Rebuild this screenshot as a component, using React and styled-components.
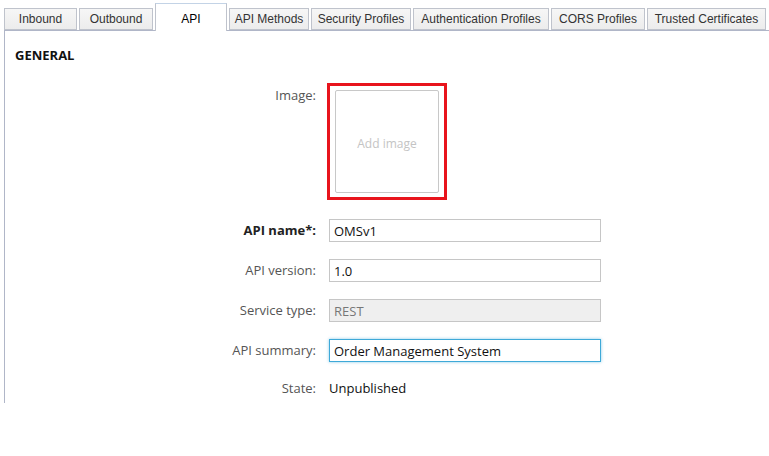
import styled, { createGlobalStyle } from "styled-components";

const GlobalStyle = createGlobalStyle`
  body {
    margin: 0;
    background: #fff;
    font-family: "Open Sans", sans-serif;
  }
`;

const Page = styled.div`
  width: 769px;
  height: 456px;
  padding: 3px 0 0 4px;
  box-sizing: border-box;
  overflow: hidden;
`;

const TabBar = styled.div`
  display: flex;
  align-items: flex-end;
  gap: 2px;
  height: 27px;
  position: relative;
  z-index: 1;
`;

const Tab = styled.div`
  box-sizing: border-box;
  width: ${(p) => p.$w}px;
  height: ${(p) => (p.$active ? 28 : 22)}px;
  display: flex;
  align-items: center;
  justify-content: center;
  font-family: "Liberation Sans", Arial, sans-serif;
  font-size: 12px;
  color: ${(p) => (p.$active ? "#000" : "#333")};
  background: ${(p) => (p.$active ? "#fff" : "linear-gradient(#f6f6f6, #ececec)")};
  border: 1px solid #bfc3cc;
  border-top-color: ${(p) => (p.$active ? "#c3d3e6" : "#bfc3cc")};
  border-bottom: ${(p) => (p.$active ? "none" : "1px solid #bfc3cc")};
  margin-bottom: ${(p) => (p.$active ? "-1px" : "0")};
  padding-top: ${(p) => (p.$active ? "2px" : "0")};
  white-space: nowrap;
`;

const Panel = styled.div`
  border-top: 1px solid #b0b6c8;
  border-left: 1px solid #b0b6c8;
  height: 373px;
  box-sizing: border-box;
  padding: 15px 0 0 10px;
`;

const Heading = styled.div`
  font-size: 13px;
  font-weight: 700;
  color: #111;
  line-height: 18px;
  margin-bottom: 19px;
`;

const Form = styled.div`
  display: grid;
  grid-template-columns: 301px 272px;
  column-gap: 13px;
  row-gap: 17px;
`;

const Label = styled.div`
  text-align: right;
  font-size: 13px;
  color: ${(p) => (p.$bold ? "#222" : "#555")};
  font-weight: ${(p) => (p.$bold ? 700 : 400)};
  line-height: ${(p) => (p.$short ? "18px" : "23px")};
  padding-top: ${(p) => (p.$top ? "3px" : "0")};
`;

const ImageFrame = styled.div`
  width: 120px;
  height: 117px;
  box-sizing: border-box;
  border: 3px solid #e8141c;
  margin: 0 0 2px -2px;
  padding: 4px 5px 4px 5px;
`;

const ImageDrop = styled.div`
  height: 100%;
  border: 1px solid #c8c8c8;
  border-radius: 2px;
  box-sizing: border-box;
  display: flex;
  align-items: center;
  justify-content: center;
  padding-top: 3px;
  font-size: 12px;
  color: #c4c4c4;
`;

const Input = styled.div`
  height: 23px;
  box-sizing: border-box;
  border: 1px solid ${(p) => (p.$focus ? "#3ea9d8" : "#c6c6c6")};
  box-shadow: ${(p) => (p.$focus ? "0 0 3px rgba(62,169,216,0.6)" : "none")};
  background: ${(p) => (p.$disabled ? "#efefef" : "#fff")};
  color: ${(p) => (p.$disabled ? "#777" : "#111")};
  font-size: 13px;
  line-height: 22px;
  padding-left: 4px;
`;

const Value = styled.div`
  font-size: 13px;
  color: #111;
  line-height: 18px;
  height: 18px;
`;

const tabs = [
  ["Inbound", 73],
  ["Outbound", 74],
  ["API", 72, true],
  ["API Methods", 80],
  ["Security Profiles", 100],
  ["Authentication Profiles", 136],
  ["CORS Profiles", 94],
  ["Trusted Certificates", 119],
];

export default function App() {
  return (
    <Page>
      <GlobalStyle />
      <TabBar>
        {tabs.map(([name, w, active]) => (
          <Tab key={name} $w={w} $active={active}>
            {name}
          </Tab>
        ))}
      </TabBar>
      <Panel>
        <Heading>GENERAL</Heading>
        <Form>
          <Label $top $short>Image:</Label>
          <ImageFrame>
            <ImageDrop>Add image</ImageDrop>
          </ImageFrame>

          <Label $bold>API name*:</Label>
          <Input>OMSv1</Input>

          <Label>API version:</Label>
          <Input>1.0</Input>

          <Label>Service type:</Label>
          <Input $disabled>REST</Input>

          <Label>API summary:</Label>
          <Input $focus>Order Management System</Input>

          <Label $short>State:</Label>
          <Value>Unpublished</Value>
        </Form>
      </Panel>
    </Page>
  );
}
